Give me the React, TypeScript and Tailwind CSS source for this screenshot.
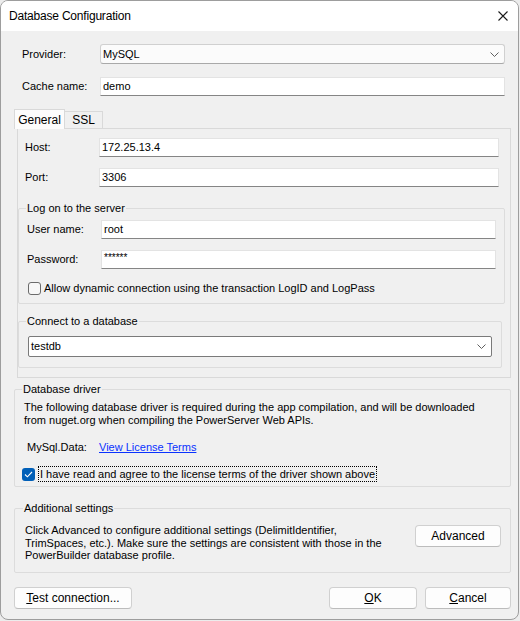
import { ReactNode } from 'react';

function Chevron() {
  return (
    <svg width="9" height="5" viewBox="0 0 9 5" className="shrink-0">
      <path d="M0.5 0.5 L4.5 4.5 L8.5 0.5" fill="none" stroke="#5f5f5f" strokeWidth="1" />
    </svg>
  );
}

function TextBox({ value, width }: { value: string; width: string }) {
  return (
    <div
      className={`${width} h-[19px] bg-white border border-[#e3e3e3] border-b-[#858585] flex items-center pl-[2px] text-black`}
    >
      {value}
    </div>
  );
}

function Group({ title, left, children, className }: { title: string; left: string; children: ReactNode; className: string }) {
  return (
    <div className={`relative border border-[#dcdcdc] rounded-[2px] ${className}`}>
      <span className={`absolute -top-[7px] ${left} bg-[#f0f0f0] px-[1px] leading-[13px] text-black`}>{title}</span>
      {children}
    </div>
  );
}

function Button({ children, width }: { children: ReactNode; width: string }) {
  return (
    <button
      className={`${width} h-[22px] bg-[#fdfdfd] border border-[#d0d0d0] border-b-[#bcbcbc] rounded-[4px] flex items-center justify-center text-[12px] text-black`}
    >
      {children}
    </button>
  );
}

export default function App() {
  return (
    <div className="w-[520px] h-[621px] bg-[#ececec] font-['Liberation_Sans',Arial,sans-serif] text-[11px] text-black">
      <div className="w-[519px] h-[620px] rounded-[8px] border border-[#9d9d9d] bg-[#f0f0f0] overflow-hidden flex flex-col">
        {/* title bar */}
        <div className="h-[30px] bg-white flex items-center justify-between pl-[8px] pr-[10px] shrink-0">
          <span className="text-[12px] tracking-[-0.2px]">Database Configuration</span>
          <svg width="10" height="10" viewBox="0 0 10 10">
            <path d="M0.5 0.5 L9.5 9.5 M9.5 0.5 L0.5 9.5" stroke="#1b1b1b" strokeWidth="1.1" />
          </svg>
        </div>

        <div className="flex flex-col pl-[13px] pt-[13px]">
          {/* provider */}
          <div className="flex items-center h-[20px]">
            <span className="w-[86px] pl-[8px]">Provider:</span>
            <div className="w-[405px] h-[20px] bg-[#fbfbfb] border border-[#d0d0d0] border-b-[#a9a9a9] rounded-[3px] flex items-center justify-between pl-[2px] pr-[5px]">
              <span>MySQL</span>
              <Chevron />
            </div>
          </div>

          {/* cache name */}
          <div className="flex items-center mt-[13px]">
            <span className="w-[86px] pl-[8px]">Cache name:</span>
            <TextBox value="demo" width="w-[405px]" />
          </div>

          {/* tabs */}
          <div className="flex items-end h-[19px] mt-[13px]">
            <div className="relative z-10 -mb-px w-[51px] h-[20px] bg-[#fcfcfc] border border-b-0 border-[#d9d9d9] flex items-center justify-center text-[12px]">
              General
            </div>
            <div className="w-[38px] h-[17px] bg-[#f0f0f0] border border-l-0 border-b-0 border-[#d9d9d9] flex items-center justify-center text-[12px]">
              SSL
            </div>
          </div>
          <div className="ml-[3px] w-[494px] h-[250px] border border-[#d9d9d9] flex flex-col">
            <div className="flex items-center mt-[9px]">
              <span className="w-[81px] pl-[7px]">Host:</span>
              <TextBox value="172.25.13.4" width="w-[400px]" />
            </div>
            <div className="flex items-center mt-[11px]">
              <span className="w-[81px] pl-[7px]">Port:</span>
              <TextBox value="3306" width="w-[400px]" />
            </div>

            <Group title="Log on to the server" left="left-[7px]" className="mt-[21px] w-[487px] h-[96px] flex flex-col">
              <div className="flex items-center mt-[11px]">
                <span className="w-[82px] pl-[8px]">User name:</span>
                <TextBox value="root" width="w-[395px]" />
              </div>
              <div className="flex items-center mt-[11px]">
                <span className="w-[82px] pl-[8px]">Password:</span>
                <div className="w-[395px] h-[19px] bg-white border border-[#e3e3e3] border-b-[#858585] flex items-start pt-[1px] pl-[2px] text-[10px] leading-[12px]">
                  ******
                </div>
              </div>
              <div className="flex items-center mt-[11px] pl-[9px] gap-[3px]">
                <div className="w-[13px] h-[13px] rounded-[3px] border border-[#6b6b6b] bg-[#f7f7f7]" />
                <span>Allow dynamic connection using the transaction LogID and LogPass</span>
              </div>
            </Group>

            <Group title="Connect to a database" left="left-[7px]" className="mt-[17px] w-[484px] h-[47px]">
              <div className="ml-[9px] mt-[14px] w-[464px] h-[21px] bg-white border border-[#7a7a7a] rounded-[2px] flex items-center justify-between pl-[2px] pr-[5px]">
                <span>testdb</span>
                <Chevron />
              </div>
            </Group>
          </div>

          {/* database driver */}
          <Group title="Database driver" left="left-[7px]" className="mt-[11px] w-[497px] h-[98px] flex flex-col">
            <p className="mt-[11px] pl-[9px] leading-[13px]">
              The following database driver is required during the app compilation, and will be downloaded
              <br />
              from nuget.org when compiling the PowerServer Web APIs.
            </p>
            <div className="flex items-center mt-[14px] pl-[12px] leading-[13px]">
              <span className="w-[72px]">MySql.Data:</span>
              <span className="text-[#0a32ff] underline">View License Terms</span>
            </div>
            <div className="flex items-center mt-[12px] pl-[7px] gap-[3px]">
              <div className="w-[13px] h-[13px] rounded-[3px] bg-[#005fb8] flex items-center justify-center">
                <svg width="9" height="7" viewBox="0 0 9 7">
                  <path d="M1 3.5 L3.4 5.8 L8 1" fill="none" stroke="white" strokeWidth="1.1" />
                </svg>
              </div>
              <span className="h-[16px] flex items-center px-[1px] border border-dotted border-black">
                I have read and agree to the license terms of the driver shown above
              </span>
            </div>
          </Group>

          {/* additional settings */}
          <Group title="Additional settings" left="left-[8px]" className="mt-[21px] w-[497px] h-[65px] flex items-start justify-between">
            <p className="mt-[15px] pl-[10px] leading-[12.5px]">
              Click Advanced to configure additional settings (DelimitIdentifier,
              <br />
              TrimSpaces, etc.). Make sure the settings are consistent with those in the
              <br />
              PowerBuilder database profile.
            </p>
            <div className="mt-[16px] mr-[9px]">
              <Button width="w-[86px]">Advanced</Button>
            </div>
          </Group>

          {/* footer */}
          <div className="flex items-center mt-[14px] w-[497px]">
            <Button width="w-[118px]">
              <span>
                <span className="underline">T</span>est connection...
              </span>
            </Button>
            <div className="ml-auto flex gap-[8px]">
              <Button width="w-[88px]">
                <span>
                  <span className="underline">O</span>K
                </span>
              </Button>
              <Button width="w-[86px]">
                <span>
                  <span className="underline">C</span>ancel
                </span>
              </Button>
            </div>
          </div>
        </div>
      </div>
    </div>
  );
}
